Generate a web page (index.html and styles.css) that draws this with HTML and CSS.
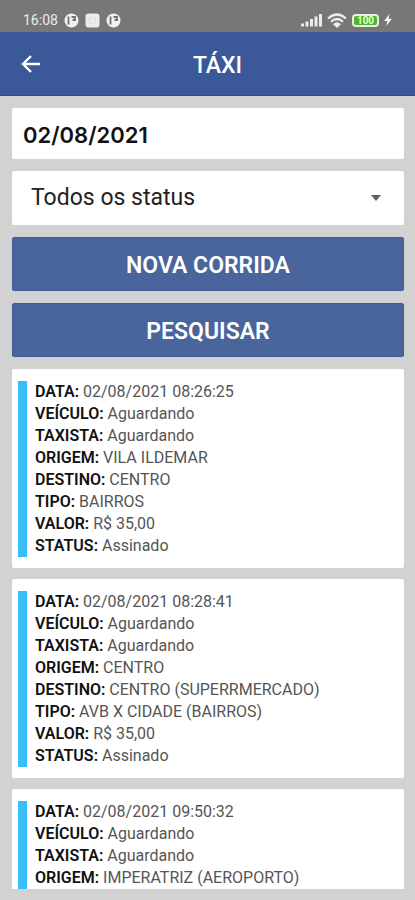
FILE: index.html
```html
<!DOCTYPE html>
<html lang="pt-BR">
<head>
    <meta charset="UTF-8">
    <meta name="viewport" content="width=device-width, initial-scale=1.0">
    <title>Táxi</title>
    <link rel="stylesheet" href="styles.css">
</head>
<body>
    <div class="status-bar">
        <div class="status-left">
            <span>16:08</span>
            <svg width="15" height="15" viewBox="0 0 15 15"><circle cx="7.5" cy="7.5" r="7" fill="#f1f1f1"/><path d="M4.500 3.500v8M7.500 4h3.500v3H8.500" fill="none" stroke="#707070" stroke-width="1.800"/></svg>
            <svg width="15" height="15" viewBox="0 0 15 15"><rect x="0.500" y="0.500" width="14" height="14" rx="3" fill="#ececec"/><circle cx="7.500" cy="7.500" r="3.500" fill="none" stroke="#e0e0e0"/></svg>
            <svg width="15" height="15" viewBox="0 0 15 15"><circle cx="7.5" cy="7.5" r="7" fill="#f1f1f1"/><path d="M4.500 3.500v8M7.500 4h3.500v3H8.500" fill="none" stroke="#707070" stroke-width="1.800"/></svg>
        </div>
        <div class="status-right">
            <svg width="21" height="14" viewBox="0 0 21 14" fill="#ececec"><rect x="0" y="10.500" width="3" height="3"/><rect x="4.500" y="8.500" width="3" height="5"/><rect x="9" y="6" width="3" height="7.500"/><rect x="13.500" y="3.500" width="3" height="10"/><rect x="18" y="1" width="3" height="12.500"/></svg>
            <svg width="20" height="15" viewBox="0 0 20 15" fill="none" stroke="#ececec" stroke-width="2.200"><path d="M1 5.500Q10-2.500 19 5.500M4 8.700Q10 3.300 16 8.700"/><path d="M6 11.200Q10 7.300 14 11.200L10 15Z" fill="#ececec" stroke="none"/></svg>
            <div class="battery"><span>100</span></div>
            <svg width="8" height="12" viewBox="0 0 8 12"><path d="M5.500 0L0 7h3.300L2.200 12L8 4.800H4.600Z" fill="#f4f4f4"/></svg>
        </div>
    </div>
    <header class="header">
        <button class="back" aria-label="Voltar">
            <svg width="20" height="20" viewBox="0 0 20 20" fill="none" stroke="#fff" stroke-width="2.400"><path d="M20 10H3M11 2L3 10l8 8"/></svg>
        </button>
        <h1>TÁXI</h1>
    </header>
    <main class="content">
        <input class="field date" type="text" value="02/08/2021" aria-label="Data">
        <div class="select-box">
            <select class="field" aria-label="Status">
                <option>Todos os status</option>
            </select>
            <svg width="10" height="6" viewBox="0 0 10 6"><path d="M0 0h10L5 6Z" fill="#5f5f5f"/></svg>
        </div>
        <button class="btn">NOVA CORRIDA</button>
        <button class="btn">PESQUISAR</button>
        <div class="list">
            <article class="card">
                <div class="info">
                    <p><b>DATA:</b> 02/08/2021 08:26:25</p>
                    <p><b>VEÍCULO:</b> Aguardando</p>
                    <p><b>TAXISTA:</b> Aguardando</p>
                    <p><b>ORIGEM:</b> VILA ILDEMAR</p>
                    <p><b>DESTINO:</b> CENTRO</p>
                    <p><b>TIPO:</b> BAIRROS</p>
                    <p><b>VALOR:</b> R$ 35,00</p>
                    <p><b>STATUS:</b> Assinado</p>
                </div>
            </article>
            <article class="card">
                <div class="info">
                    <p><b>DATA:</b> 02/08/2021 08:28:41</p>
                    <p><b>VEÍCULO:</b> Aguardando</p>
                    <p><b>TAXISTA:</b> Aguardando</p>
                    <p><b>ORIGEM:</b> CENTRO</p>
                    <p><b>DESTINO:</b> CENTRO (SUPERRMERCADO)</p>
                    <p><b>TIPO:</b> AVB X CIDADE (BAIRROS)</p>
                    <p><b>VALOR:</b> R$ 35,00</p>
                    <p><b>STATUS:</b> Assinado</p>
                </div>
            </article>
            <article class="card">
                <div class="info">
                    <p><b>DATA:</b> 02/08/2021 09:50:32</p>
                    <p><b>VEÍCULO:</b> Aguardando</p>
                    <p><b>TAXISTA:</b> Aguardando</p>
                    <p><b>ORIGEM:</b> IMPERATRIZ (AEROPORTO)</p>
                </div>
            </article>
        </div>
    </main>
</body>
</html>
```
FILE: styles.css
```css
* {
    box-sizing: border-box;
}
body {
    margin: 0;
    height: 100vh;
    display: flex;
    flex-direction: column;
    font-family: Roboto, "Liberation Sans", sans-serif;
    background: #d2d2d2;
}
.status-bar {
    height: 32px;
    padding: 8px 23px 0;
    display: flex;
    justify-content: space-between;
    background: #777777;
    color: #ececec;
    font-size: 14px;
}
.status-left,
.status-right {
    display: flex;
    align-items: center;
    gap: 5px;
}
.status-left {
    gap: 6px;
}
.battery {
    width: 27px;
    height: 13px;
    border: 2px solid #ececec;
    border-radius: 4px;
    background: #4fb52a;
    color: #e4ffd8;
    font-size: 10px;
    font-weight: 700;
    line-height: 9px;
    text-align: center;
}
.header {
    height: 64px;
    padding: 0 20px;
    display: grid;
    grid-template-columns: 20px 1fr;
    align-items: center;
    background: #3b5998;
    border-bottom: 1px solid #2f4d8e;
    color: #fff;
}
.back {
    padding: 0;
    border: none;
    background: none;
    display: flex;
}
.header h1 {
    margin: 0;
    padding-top: 4px;
    font-size: 23px;
    font-weight: 500;
    text-align: center;
}
.content {
    flex: 1;
    min-height: 0;
    padding: 12px 11px 11px 12px;
    display: flex;
    flex-direction: column;
    gap: 12px;
}
.field {
    width: 100%;
    height: 54px;
    flex-shrink: 0;
    padding: 0 19px 2px;
    border: none;
    border-radius: 2px;
    background: #fff;
    color: #222;
    font-family: inherit;
    font-size: 23px;
    appearance: none;
}
.date {
    height: 51px;
    padding: 3px 11px 0;
    color: #111;
    font-family: Inter, sans-serif;
    font-size: 22px;
    font-weight: 600;
}
.select-box {
    display: grid;
    align-items: center;
}
.select-box > * {
    grid-area: 1 / 1;
}
.select-box svg {
    justify-self: end;
    margin-right: 23px;
    pointer-events: none;
}
.btn {
    height: 54px;
    flex-shrink: 0;
    padding: 2px 6px 0;
    border: 1px solid #3b5998;
    border-radius: 2px;
    background: #4a649c;
    color: #fff;
    font-family: inherit;
    font-size: 23px;
    font-weight: 600;
}
.list {
    flex: 1;
    min-height: 0;
    overflow: hidden;
    display: flex;
    flex-direction: column;
    gap: 11px;
}
.card {
    flex-shrink: 0;
    padding: 12px 6px 11px;
    border-radius: 2px;
    background: #fff;
}
.info {
    min-height: 176px;
    padding-left: 8px;
    border-left: 9px solid #36bffa;
    color: #555;
    font-size: 16px;
    font-weight: 400;
    line-height: 22px;
}
.info p {
    margin: 0;
}
.info b {
    color: #111;
    font-weight: 600;
}
```
